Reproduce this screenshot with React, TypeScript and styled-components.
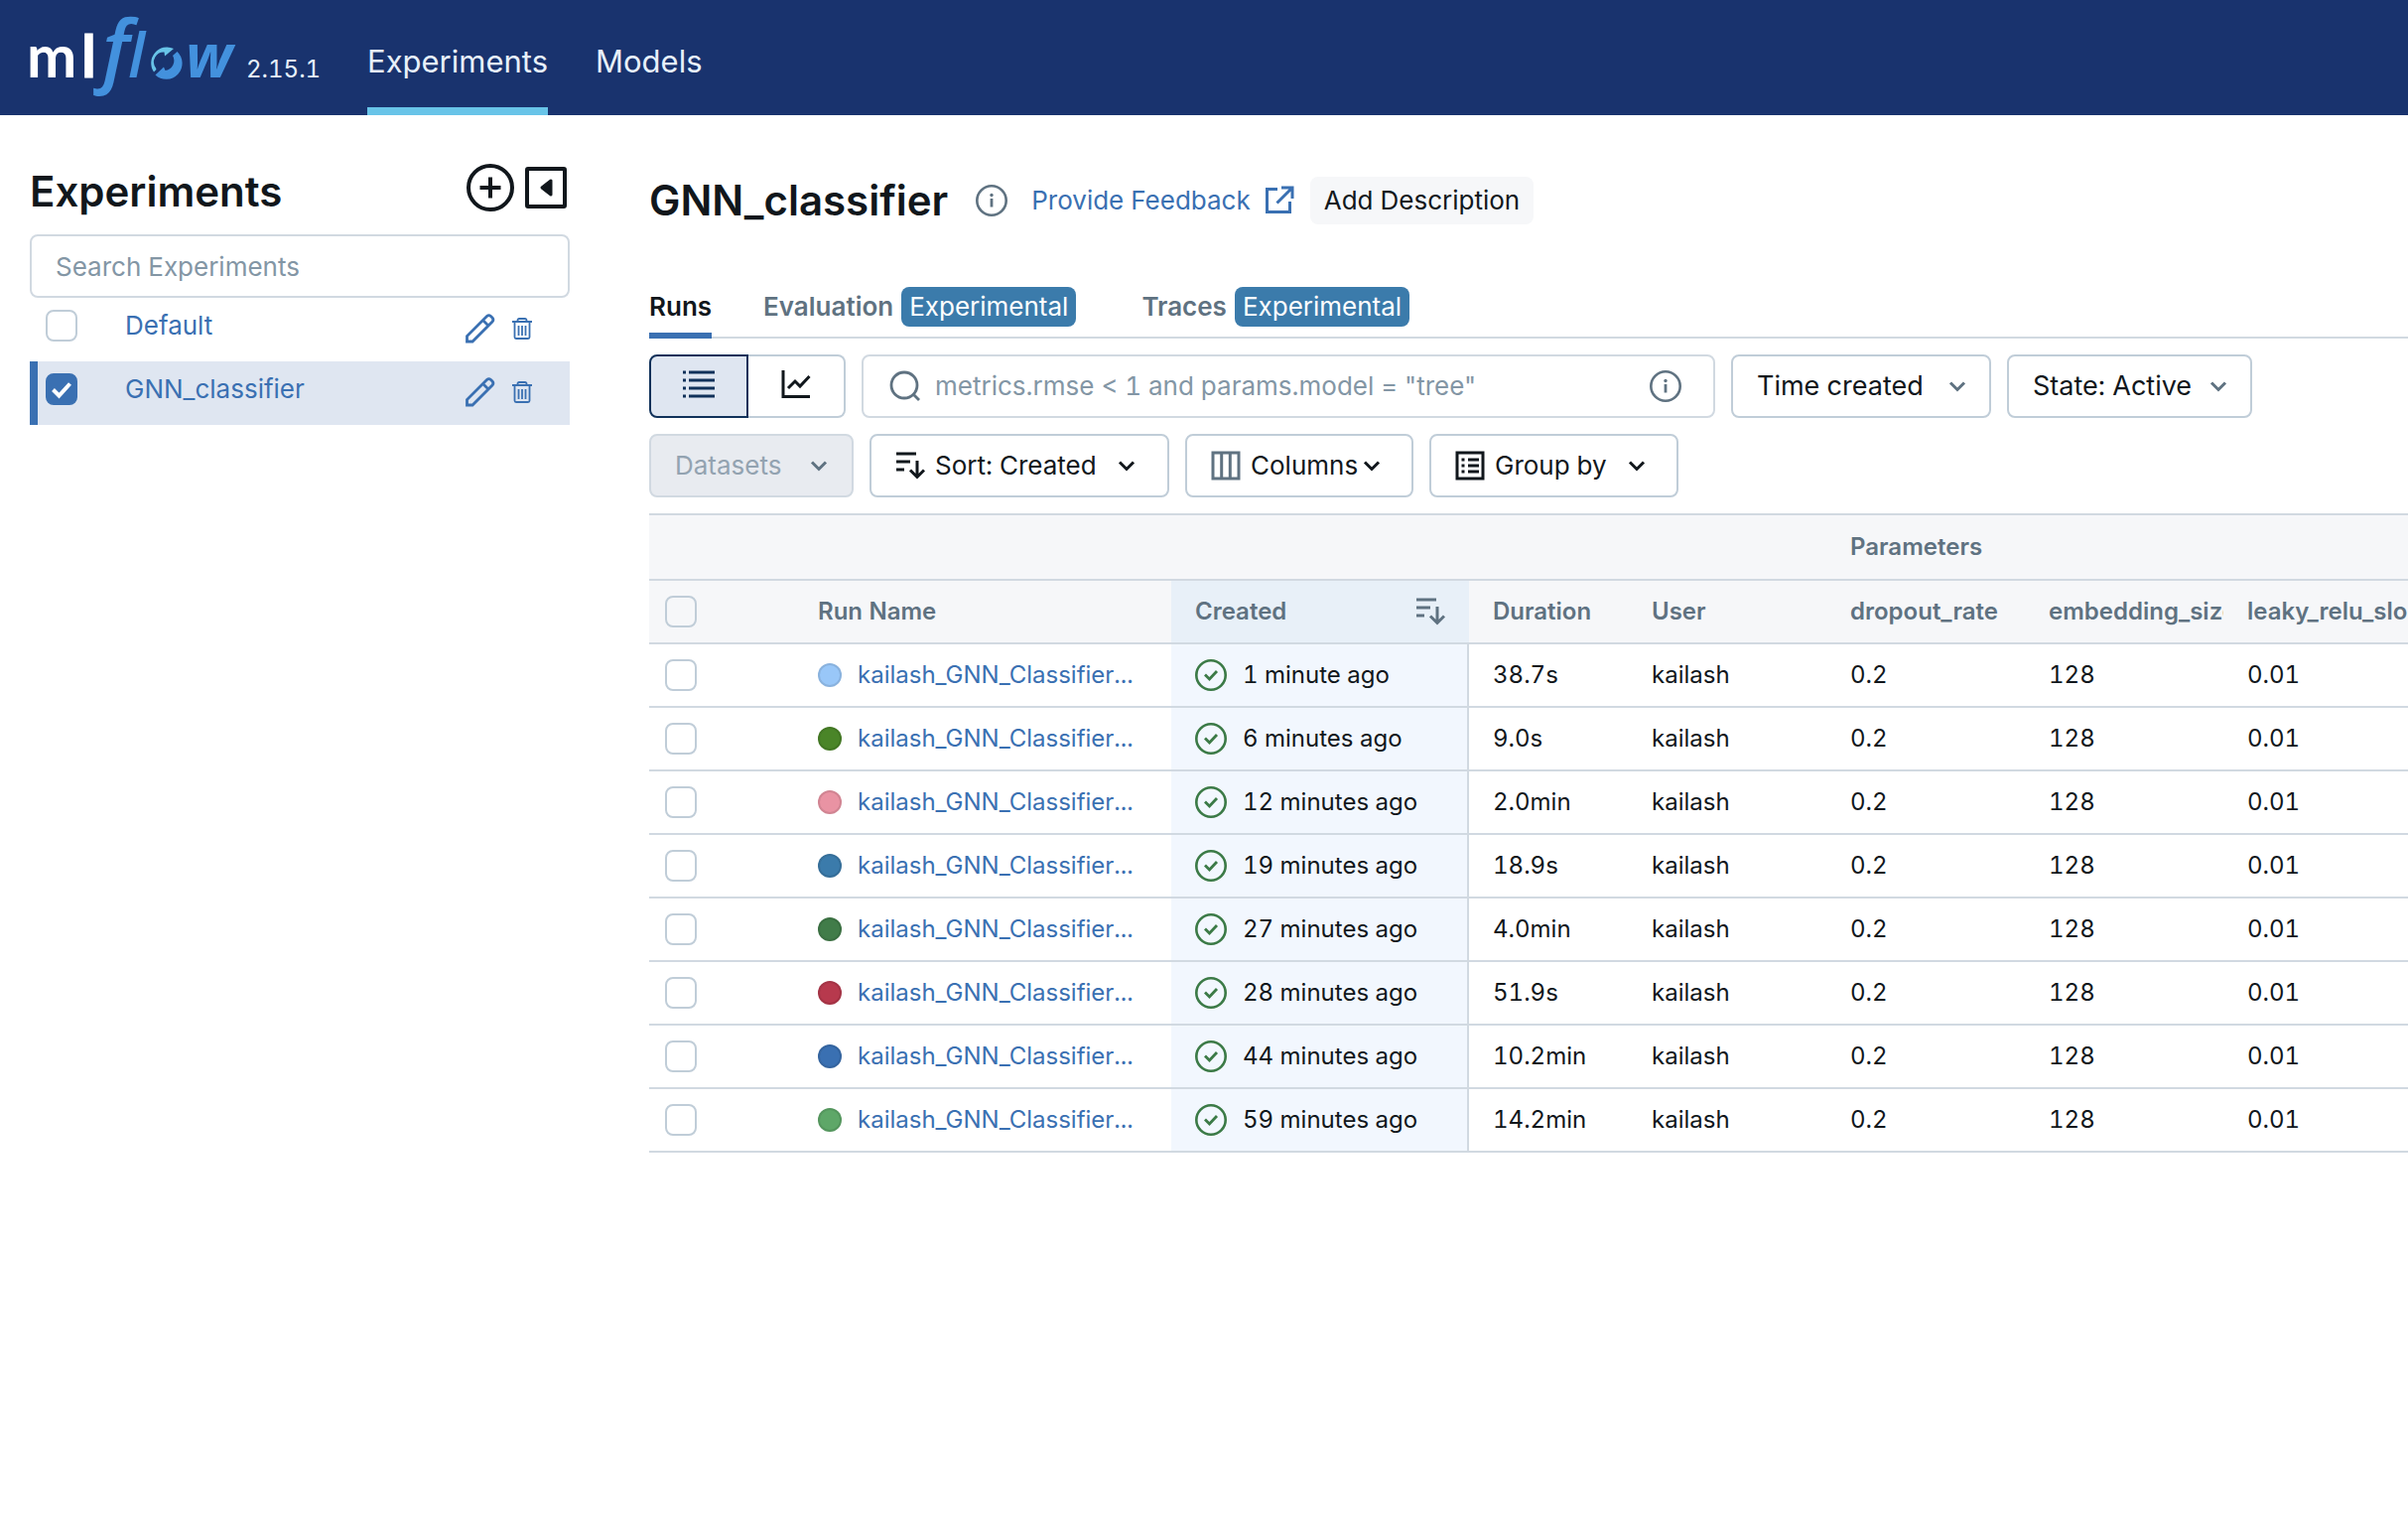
import React from "react";
import styled, { createGlobalStyle } from "styled-components";

const C = {
  navy: "#19336e",
  sky: "#68c4e8",
  text: "#11171c",
  sub: "#5f7281",
  hint: "#8396a5",
  link: "#3a70b2",
  line: "#d1d9e1",
  control: "#c0cdd8",
  head: "#f6f7f9",
  active: "#dfe6f1",
  badge: "#3b7bab",
  green: "#3b7a46",
};

const GlobalStyle = createGlobalStyle`
  * { box-sizing: border-box; }
  body {
    margin: 0;
    background: #fff;
    color: ${C.text};
    font-family: Inter, "Liberation Sans", sans-serif;
    font-size: 26px;
    line-height: 40px;
    font-variant-numeric: tabular-nums;
    overflow-x: hidden;
  }
  button, input, select { font: inherit; font-variant-numeric: tabular-nums; color: inherit; }
  a { color: inherit; text-decoration: none; }
  svg { display: block; flex: none; }
`;

const TopBar = styled.header`
  display: flex;
  align-items: stretch;
  height: 116px;
  background: ${C.navy};
  color: #e8f1fb;
`;
const Brand = styled.a`
  display: flex;
  align-items: flex-start;
  width: 370px;
`;
const Version = styled.span`
  margin: 50px 0 0 4px;
  font-size: 24px;
`;
const TopNav = styled.nav`
  display: flex;
  gap: 48px;
`;
const TopLink = styled.a<{ $active?: boolean }>`
  display: flex;
  align-items: center;
  padding-top: 16px;
  font-size: 31px;
  border-bottom: 8px solid ${(p) => (p.$active ? C.sky : "transparent")};
`;

const Body = styled.div`
  display: grid;
  grid-template-columns: 544px minmax(0, 1fr);
  column-gap: 80px;
  padding-left: 30px;
`;
const Sidebar = styled.aside`
  padding-top: 48px;
`;
const SideHead = styled.div`
  display: flex;
  align-items: flex-start;
  gap: 10px;
  height: 72px;
  padding-right: 3px;
`;
const SideTitle = styled.h1`
  flex: 1;
  margin: 5px 0 0;
  font-size: 42px;
  line-height: 48px;
  font-weight: 600;
`;
const IconButton = styled.button`
  display: flex;
  align-items: center;
  justify-content: center;
  padding: 0;
  border: 0;
  background: none;
`;
const HeadButton = styled(IconButton)`
  height: 50px;
`;
const SideSearch = styled.input`
  display: block;
  width: 100%;
  height: 64px;
  padding: 0 24px;
  border: 2px solid ${C.line};
  border-radius: 8px;
  outline: none;
  &::placeholder { color: ${C.hint}; opacity: 1; }
`;
const ExpList = styled.ul`
  margin: 0;
  padding: 0;
  list-style: none;
`;
const ExpItem = styled.li<{ $active?: boolean }>`
  display: flex;
  align-items: center;
  height: 64px;
  padding: 0 37px 8px 8px;
  border-left: 8px solid ${(p) => (p.$active ? C.link : "transparent")};
  background: ${(p) => (p.$active ? C.active : "transparent")};
  color: ${C.link};
`;
const ExpLink = styled.a`
  flex: 1;
  margin-left: 48px;
`;
const ExpActions = styled.span`
  display: flex;
  align-items: center;
  gap: 16px;
  padding-top: 6px;
`;

const Check = styled.input.attrs({ type: "checkbox" })`
  appearance: none;
  display: block;
  flex: none;
  width: 32px;
  height: 32px;
  margin: 0;
  border: 2px solid ${C.control};
  border-radius: 8px;
  background: transparent;
  &:checked {
    border-color: ${C.link};
    background: ${C.link} url("data:image/svg+xml,%3Csvg xmlns='http://www.w3.org/2000/svg' viewBox='0 0 28 28'%3E%3Cpath d='M5.500 14.500l6 6L22.500 8.500' fill='none' stroke='white' stroke-width='4'/%3E%3C/svg%3E") center / 28px no-repeat;
  }
`;

const Main = styled.main`
  padding-top: 61px;
  min-width: 0;
`;
const TitleRow = styled.div`
  display: flex;
  align-items: center;
  height: 50px;
`;
const PageTitle = styled.h2`
  margin: 0 28px 0 0;
  font-size: 42px;
  line-height: 48px;
  font-weight: 600;
`;
const Feedback = styled.a`
  display: flex;
  align-items: center;
  gap: 14px;
  margin: 0 16px 0 24px;
  color: ${C.link};
`;
const SoftButton = styled.button`
  height: 48px;
  padding: 0 14px;
  border: 0;
  border-radius: 8px;
  background: ${C.head};
`;
const Tabs = styled.div`
  display: flex;
  height: 62px;
  margin-top: 52px;
  box-shadow: inset 0 -2px ${C.line};
`;
const Tab = styled.button<{ $active?: boolean }>`
  display: flex;
  align-items: center;
  gap: 8px;
  margin-right: ${(p) => (p.$active ? "52px" : "66px")};
  padding: 4px 0 0;
  border: 0;
  border-bottom: 6px solid ${(p) => (p.$active ? C.link : "transparent")};
  background: none;
  color: ${(p) => (p.$active ? C.text : C.sub)};
  font-weight: 600;
`;
const Badge = styled.span`
  padding: 0 8px;
  border-radius: 8px;
  background: ${C.badge};
  color: #fff;
  font-weight: 400;
`;

const Toolbar = styled.div`
  display: grid;
  gap: 16px;
  padding: 16px 0;
`;
const ToolRow = styled.div`
  display: flex;
  gap: 16px;
`;
const Segments = styled.div`
  display: flex;
`;
const Segment = styled.button<{ $active?: boolean }>`
  display: flex;
  align-items: center;
  justify-content: center;
  width: ${(p) => (p.$active ? "100px" : "98px")};
  height: 64px;
  padding: 0 0 4px;
  border: 2px solid ${(p) => (p.$active ? "#10315a" : C.control)};
  border-left-width: ${(p) => (p.$active ? "2px" : "0")};
  border-radius: ${(p) => (p.$active ? "8px 0 0 8px" : "0 8px 8px 0")};
  background: ${(p) => (p.$active ? C.active : "#fff")};
`;
const Filter = styled.label`
  display: flex;
  align-items: center;
  gap: 14px;
  width: 860px;
  height: 64px;
  padding: 0 32px 0 26px;
  border: 2px solid ${C.line};
  border-radius: 8px;
`;
const FilterInput = styled.input`
  flex: 1;
  min-width: 0;
  padding: 0;
  border: 0;
  outline: none;
  &::placeholder { color: ${C.hint}; opacity: 1; }
`;
const SelectBox = styled.span<{ $w: number }>`
  display: grid;
  align-items: center;
  width: ${(p) => p.$w}px;
  height: 64px;
  border: 2px solid ${C.control};
  border-radius: 8px;
  color: ${C.sub};
  > * { grid-area: 1 / 1; }
  > svg { justify-self: end; margin-right: 22px; pointer-events: none; }
`;
const Select = styled.select`
  appearance: none;
  width: 100%;
  height: 100%;
  padding: 0 24px;
  border: 0;
  outline: none;
  background: transparent;
  color: ${C.text};
  font-size: 27px;
`;
const MenuButton = styled.button<{ $w: number; $gap: number }>`
  display: flex;
  align-items: center;
  gap: 10px;
  width: ${(p) => p.$w}px;
  height: 64px;
  padding: 0 24px;
  border: 2px solid ${C.control};
  border-radius: 8px;
  background: #fff;
  white-space: nowrap;
  > svg:last-child { margin-left: ${(p) => p.$gap}px; }
  &:disabled {
    border-color: ${C.line};
    background: #e8ebf0;
    color: #93a3b1;
    > svg { color: ${C.sub}; }
  }
`;

const TableWrap = styled.div`
  overflow: hidden;
`;
const Table = styled.table`
  width: 1786px;
  table-layout: fixed;
  border-collapse: separate;
  border-spacing: 0;
  border-top: 2px solid ${C.line};
  font-size: 24px;
`;
const Th = styled.th<{ $sorted?: boolean }>`
  height: ${(p) => (p.colSpan && p.colSpan > 1 ? "66px" : "64px")};
  padding: 0 0 0 24px;
  overflow: hidden;
  border-bottom: 2px solid ${C.line};
  background: ${(p) => (p.$sorted ? "#e8f0f8" : C.head)};
  color: ${C.sub};
  font-weight: 600;
  text-align: left;
  white-space: nowrap;
`;
const Td = styled.td<{ $sorted?: boolean }>`
  height: 64px;
  padding: 0 0 0 24px;
  border-bottom: 2px solid ${C.line};
  border-right: ${(p) => (p.$sorted ? `2px solid ${C.line}` : "0")};
  background: ${(p) => (p.$sorted ? "#f2f7fe" : "transparent")};
  white-space: nowrap;
`;
const CellRow = styled.div<{ $gap: number }>`
  display: flex;
  align-items: center;
  gap: ${(p) => p.$gap}px;
  padding-right: 24px;
`;
const SortHead = styled.div`
  display: flex;
  align-items: center;
  justify-content: space-between;
  padding-right: 24px;
`;
const PickTh = styled(Th)`padding-left: 16px;`;
const PickTd = styled(Td)`padding-left: 16px;`;
const Dot = styled.span<{ $c: string }>`
  width: 24px;
  height: 24px;
  flex: none;
  border: 2px solid rgba(0, 0, 0, 0.1);
  border-radius: 50%;
  background: ${(p) => p.$c};
`;
const RunLink = styled.a`
  overflow: hidden;
  text-overflow: ellipsis;
  color: ${C.link};
`;

const Svg = ({ s, children, c, vb }: { s: number; children: React.ReactNode; c?: string; vb?: string }) => (
  <svg width={s} height={s} viewBox={vb ?? "0 0 32 32"} fill="none" stroke="currentColor" color={c} aria-hidden="true">
    {children}
  </svg>
);
const InfoIcon = () => (
  <Svg s={32} c={C.sub}>
    <circle cx="16" cy="16" r="14.700" strokeWidth="2.600" />
    <path d="M16 14v8.500" strokeWidth="2.800" />
    <circle cx="16" cy="10.500" r="1.700" fill="currentColor" stroke="none" />
  </Svg>
);
const Chevron = () => (
  <Svg s={20} vb="0 0 20 20">
    <path d="M3 6.500l7 7 7-7" strokeWidth="3" />
  </Svg>
);
const SortIcon = ({ c }: { c?: string }) => (
  <Svg s={30} c={c} vb="0 0 30 30">
    <path d="M1 3h20M1 11h14M1 19h8M22 10v16M15 19.500l7 7 7-7" strokeWidth="3" />
  </Svg>
);
const StatusIcon = () => (
  <Svg s={32} c={C.green}>
    <circle cx="16" cy="16" r="14.700" strokeWidth="2.600" />
    <path d="M10 15.500l4.500 4.500L22 12" strokeWidth="2.800" />
  </Svg>
);
const Pencil = () => (
  <Svg s={30} vb="0 0 30 30">
    <path d="M1.500 28v-5.500L21.500 2.500a3 3 0 0 1 4 0l1.500 1.500a3 3 0 0 1 0 4L7 28zM17.500 6.500l5.500 5.500" strokeWidth="2.800" />
  </Svg>
);
const Trash = () => (
  <Svg s={22} vb="0 0 22 22">
    <path d="M1 4h20M6.500 4V2.500a1.500 1.500 0 0 1 1.500-1.500h6a1.500 1.500 0 0 1 1.500 1.500V4M3.500 4v15.500a1.500 1.500 0 0 0 1.500 1.500h12a1.500 1.500 0 0 0 1.500-1.500V4M7.500 8v10M11 8v10M14.500 8v10" strokeWidth="1.800" />
  </Svg>
);

const Logo = () => (
  <svg width="244" height="116" viewBox="0 0 244 116" overflow="visible" role="img" aria-label="mlflow">
    <g fontFamily="Lato" fontWeight="700" fontSize="60" fill="#fff">
      <text x="27" y="78">m</text>
      <text x="82" y="78" stroke="#fff" strokeWidth="1">l</text>
    </g>
    <g fontFamily="Open Sans" fontStyle="italic" fontWeight="600" fill="#4391dd">
      <text x="103" y="78" fontSize="80">f</text>
      <text x="129" y="78" fontSize="62">l</text>
      <text x="187" y="78" fontSize="60" fontWeight="700">w</text>
    </g>
    <path d="M155 72.500A16 16 0 0 1 175 49L166 56.500L165.500 52.500A10 10 0 0 0 157 68.500L157.500 70z" fill="#68c4e8" />
    <path d="M178.500 52A16 16 0 0 1 156.500 75.500L165 67.500L166.500 71A10 10 0 0 0 174 56z" fill="#4391dd" />
  </svg>
);

const runs = [
  { c: "#99c7f8", t: "1 minute ago", d: "38.7s" },
  { c: "#4a8528", t: "6 minutes ago", d: "9.0s" },
  { c: "#e993a3", t: "12 minutes ago", d: "2.0min" },
  { c: "#3b7bab", t: "19 minutes ago", d: "18.9s" },
  { c: "#417c49", t: "27 minutes ago", d: "4.0min" },
  { c: "#b7394d", t: "28 minutes ago", d: "51.9s" },
  { c: "#3a70b2", t: "44 minutes ago", d: "10.2min" },
  { c: "#5ea768", t: "59 minutes ago", d: "14.2min" },
];
const widths = [146, 380, 300, 160, 200, 200, 200, 200];

export default function App() {
  return (
    <>
      <GlobalStyle />
      <TopBar>
        <Brand href="#">
          <Logo />
          <Version>2.15.1</Version>
        </Brand>
        <TopNav>
          <TopLink href="#" $active>Experiments</TopLink>
          <TopLink href="#">Models</TopLink>
        </TopNav>
      </TopBar>
      <Body>
        <Sidebar>
          <SideHead>
            <SideTitle>Experiments</SideTitle>
            <HeadButton aria-label="New experiment">
              <Svg s={50} vb="0 0 50 50">
                <circle cx="25" cy="25" r="22" strokeWidth="4" />
                <path d="M25 14.500v21M14.500 25h21" strokeWidth="4" />
              </Svg>
            </HeadButton>
            <HeadButton aria-label="Collapse sidebar">
              <Svg s={42} vb="0 0 42 42">
                <rect x="2" y="2" width="38" height="38" rx="1" strokeWidth="4" />
                <path d="M26 14v14l-9-7z" fill="currentColor" strokeWidth="3" strokeLinejoin="round" />
              </Svg>
            </HeadButton>
          </SideHead>
          <SideSearch aria-label="Search Experiments" placeholder="Search Experiments" />
          <ExpList>
            {["Default", "GNN_classifier"].map((n, i) => (
              <ExpItem key={n} $active={i === 1}>
                <Check aria-label={n} defaultChecked={i === 1} />
                <ExpLink href="#">{n}</ExpLink>
                <ExpActions>
                  <IconButton aria-label={`Rename ${n}`}><Pencil /></IconButton>
                  <IconButton aria-label={`Delete ${n}`}><Trash /></IconButton>
                </ExpActions>
              </ExpItem>
            ))}
          </ExpList>
        </Sidebar>
        <Main>
          <TitleRow>
            <PageTitle>GNN_classifier</PageTitle>
            <InfoIcon />
            <Feedback href="#">
              Provide Feedback
              <Svg s={30} vb="0 0 30 30">
                <path d="M13 3.500H2.500v23h23V16M17 2h11v11M27.500 2.500L12.500 17.500" strokeWidth="3" />
              </Svg>
            </Feedback>
            <SoftButton>Add Description</SoftButton>
          </TitleRow>
          <Tabs role="tablist">
            <Tab role="tab" $active>Runs</Tab>
            <Tab role="tab">Evaluation <Badge>Experimental</Badge></Tab>
            <Tab role="tab">Traces <Badge>Experimental</Badge></Tab>
          </Tabs>
          <Toolbar>
            <ToolRow>
              <Segments>
                <Segment $active aria-label="Table view">
                  <Svg s={32} c="#10315a">
                    <path d="M6 4h26M6 12h26M6 20h26M6 28h26M0 4h3M0 12h3M0 20h3M0 28h3" strokeWidth="3" />
                  </Svg>
                </Segment>
                <Segment aria-label="Chart view">
                  <Svg s={30} vb="0 0 30 30">
                    <path d="M2 1v26.500h27M7 19l7-7 5 5 9.500-10" strokeWidth="3" />
                  </Svg>
                </Segment>
              </Segments>
              <Filter>
                <Svg s={32} c={C.sub}>
                  <circle cx="15" cy="15" r="13" strokeWidth="2.800" />
                  <path d="M24 24l6 6" strokeWidth="2.800" />
                </Svg>
                <FilterInput aria-label="Filter runs" placeholder={'metrics.rmse < 1 and params.model = "tree"'} />
                <InfoIcon />
              </Filter>
              <SelectBox $w={262}>
                <Select aria-label="Time created"><option>Time created</option></Select>
                <Chevron />
              </SelectBox>
              <SelectBox $w={247}>
                <Select aria-label="State"><option>State: Active</option></Select>
                <Chevron />
              </SelectBox>
            </ToolRow>
            <ToolRow>
              <MenuButton $w={206} $gap={18} disabled>Datasets<Chevron /></MenuButton>
              <MenuButton $w={302} $gap={10}><SortIcon />Sort: Created<Chevron /></MenuButton>
              <MenuButton $w={230} $gap={-6}>
                <Svg s={30} c={C.sub} vb="0 0 30 30"><path d="M2 2h26v26H2zM10.700 2v26M19.300 2v26" strokeWidth="3" /></Svg>
                Columns<Chevron />
              </MenuButton>
              <MenuButton $w={251} $gap={10}>
                <Svg s={30} vb="0 0 30 30"><path d="M2 2h26v26H2zM13 9h11M13 15h11M13 21h11M6.500 9h3M6.500 15h3M6.500 21h3" strokeWidth="3" /></Svg>
                Group by<Chevron />
              </MenuButton>
            </ToolRow>
          </Toolbar>
          <TableWrap>
            <Table>
              <colgroup>{widths.map((w, i) => <col key={i} style={{ width: w }} />)}</colgroup>
              <thead>
                <tr>
                  <Th colSpan={5} />
                  <Th colSpan={3}>Parameters</Th>
                </tr>
                <tr>
                  <PickTh><Check aria-label="Select all runs" /></PickTh>
                  <Th>Run Name</Th>
                  <Th $sorted><SortHead>Created<SortIcon c={C.sub} /></SortHead></Th>
                  <Th>Duration</Th>
                  <Th>User</Th>
                  <Th>dropout_rate</Th>
                  <Th>embedding_size</Th>
                  <Th>leaky_relu_slope</Th>
                </tr>
              </thead>
              <tbody>
                {runs.map((r) => (
                  <tr key={r.t}>
                    <PickTd><Check aria-label={`Select run from ${r.t}`} /></PickTd>
                    <Td><CellRow $gap={16}><Dot $c={r.c} /><RunLink href="#">kailash_GNN_Classifier...</RunLink></CellRow></Td>
                    <Td $sorted><CellRow $gap={16}><StatusIcon />{r.t}</CellRow></Td>
                    <Td>{r.d}</Td>
                    <Td>kailash</Td>
                    <Td>0.2</Td>
                    <Td>128</Td>
                    <Td>0.01</Td>
                  </tr>
                ))}
              </tbody>
            </Table>
          </TableWrap>
        </Main>
      </Body>
    </>
  );
}
